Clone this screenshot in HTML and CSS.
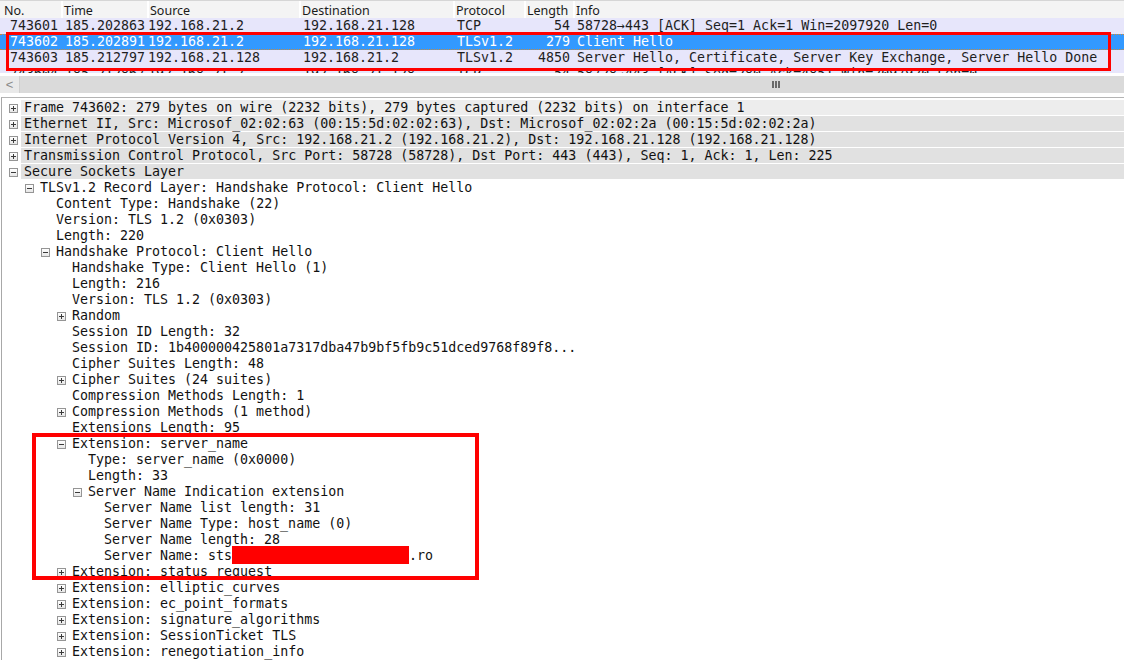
FILE: index.html
```html
<!DOCTYPE html>
<html>
<head>
<meta charset="utf-8">
<link rel="stylesheet" href="styles.css">
</head>
<body>
<div class="app">
  <div class="plist">
    <div class="prow phead">
      <div class="hc">No.</div>
      <div class="hc">Time</div>
      <div class="hc">Source</div>
      <div class="hc">Destination</div>
      <div class="hc">Protocol</div>
      <div class="hc">Length</div>
      <div class="hc">Info</div>
    </div>
    <div class="prow pdata">
      <div class="c num">743601</div>
      <div class="c time">185.202863</div>
      <div class="c src">192.168.21.2</div>
      <div class="c dst">192.168.21.128</div>
      <div class="c proto">TCP</div>
      <div class="c len">54</div>
      <div class="c info">58728→443 [ACK] Seq=1 Ack=1 Win=2097920 Len=0</div>
    </div>
    <div class="prow pdata sel">
      <div class="c num">743602</div>
      <div class="c time">185.202891</div>
      <div class="c src">192.168.21.2</div>
      <div class="c dst">192.168.21.128</div>
      <div class="c proto">TLSv1.2</div>
      <div class="c len">279</div>
      <div class="c info">Client Hello</div>
    </div>
    <div class="prow pdata">
      <div class="c num">743603</div>
      <div class="c time">185.212797</div>
      <div class="c src">192.168.21.128</div>
      <div class="c dst">192.168.21.2</div>
      <div class="c proto">TLSv1.2</div>
      <div class="c len">4850</div>
      <div class="c info">Server Hello, Certificate, Server Key Exchange, Server Hello Done</div>
    </div>
    <div class="prow pdata">
      <div class="c num">743604</div>
      <div class="c time">185.212867</div>
      <div class="c src">192.168.21.2</div>
      <div class="c dst">192.168.21.128</div>
      <div class="c proto">TCP</div>
      <div class="c len">54</div>
      <div class="c info">58728→443 [ACK] Seq=280 Ack=4851 Win=2097920 Len=0</div>
    </div>
  </div>
  <div class="hscroll">
    <div class="sb-btn">&lt;</div>
    <div class="sb-thumb"><span class="grip"><i></i><i></i><i></i></span></div>
  </div>
  <div class="tree">
    <div class="tr l0 top hov"><span class="tg plus"></span><span class="tx">Frame 743602: 279 bytes on wire (2232 bits), 279 bytes captured (2232 bits) on interface 1</span></div>
    <div class="tr l0 top"><span class="tg plus"></span><span class="tx">Ethernet II, Src: Microsof_02:02:63 (00:15:5d:02:02:63), Dst: Microsof_02:02:2a (00:15:5d:02:02:2a)</span></div>
    <div class="tr l0 top"><span class="tg plus"></span><span class="tx">Internet Protocol Version 4, Src: 192.168.21.2 (192.168.21.2), Dst: 192.168.21.128 (192.168.21.128)</span></div>
    <div class="tr l0 top"><span class="tg plus"></span><span class="tx">Transmission Control Protocol, Src Port: 58728 (58728), Dst Port: 443 (443), Seq: 1, Ack: 1, Len: 225</span></div>
    <div class="tr l0 top"><span class="tg minus"></span><span class="tx">Secure Sockets Layer</span></div>
    <div class="tr l1"><span class="tg minus"></span><span class="tx">TLSv1.2 Record Layer: Handshake Protocol: Client Hello</span></div>
    <div class="tr l2"><span class="tg"></span><span class="tx">Content Type: Handshake (22)</span></div>
    <div class="tr l2"><span class="tg"></span><span class="tx">Version: TLS 1.2 (0x0303)</span></div>
    <div class="tr l2"><span class="tg"></span><span class="tx">Length: 220</span></div>
    <div class="tr l2"><span class="tg minus"></span><span class="tx">Handshake Protocol: Client Hello</span></div>
    <div class="tr l3"><span class="tg"></span><span class="tx">Handshake Type: Client Hello (1)</span></div>
    <div class="tr l3"><span class="tg"></span><span class="tx">Length: 216</span></div>
    <div class="tr l3"><span class="tg"></span><span class="tx">Version: TLS 1.2 (0x0303)</span></div>
    <div class="tr l3"><span class="tg plus"></span><span class="tx">Random</span></div>
    <div class="tr l3"><span class="tg"></span><span class="tx">Session ID Length: 32</span></div>
    <div class="tr l3"><span class="tg"></span><span class="tx">Session ID: 1b400000425801a7317dba47b9bf5fb9c51dced9768f89f8...</span></div>
    <div class="tr l3"><span class="tg"></span><span class="tx">Cipher Suites Length: 48</span></div>
    <div class="tr l3"><span class="tg plus"></span><span class="tx">Cipher Suites (24 suites)</span></div>
    <div class="tr l3"><span class="tg"></span><span class="tx">Compression Methods Length: 1</span></div>
    <div class="tr l3"><span class="tg plus"></span><span class="tx">Compression Methods (1 method)</span></div>
    <div class="tr l3"><span class="tg"></span><span class="tx">Extensions Length: 95</span></div>
    <div class="tr l3"><span class="tg minus"></span><span class="tx">Extension: server_name</span></div>
    <div class="tr l4"><span class="tg"></span><span class="tx">Type: server_name (0x0000)</span></div>
    <div class="tr l4"><span class="tg"></span><span class="tx">Length: 33</span></div>
    <div class="tr l4"><span class="tg minus"></span><span class="tx">Server Name Indication extension</span></div>
    <div class="tr l5"><span class="tg"></span><span class="tx">Server Name list length: 31</span></div>
    <div class="tr l5"><span class="tg"></span><span class="tx">Server Name Type: host_name (0)</span></div>
    <div class="tr l5"><span class="tg"></span><span class="tx">Server Name length: 28</span></div>
    <div class="tr l5"><span class="tg"></span><span class="tx">Server Name: sts<span class="redact"></span>.ro</span></div>
    <div class="tr l3"><span class="tg plus"></span><span class="tx">Extension: status_request</span></div>
    <div class="tr l3"><span class="tg plus"></span><span class="tx">Extension: elliptic_curves</span></div>
    <div class="tr l3"><span class="tg plus"></span><span class="tx">Extension: ec_point_formats</span></div>
    <div class="tr l3"><span class="tg plus"></span><span class="tx">Extension: signature_algorithms</span></div>
    <div class="tr l3"><span class="tg plus"></span><span class="tx">Extension: SessionTicket TLS</span></div>
    <div class="tr l3"><span class="tg plus"></span><span class="tx">Extension: renegotiation_info</span></div>
  </div>
  <div class="mark mark-rows"></div>
  <div class="mark mark-sni"></div>
</div>
</body>
</html>
```

FILE: styles.css
```css
html, body {
  margin: 0;
  padding: 0;
  background: #ffffff;
}
body {
  width: 1124px;
  height: 665px;
  overflow: hidden;
}
.app {
  position: relative;
  width: 1124px;
  height: 665px;
  overflow: hidden;
  font-family: "DejaVu Sans Mono", "Liberation Mono", monospace;
  font-size: 13.3px;
  color: #111111;
}

/* ---------- packet list ---------- */
.plist {
  height: 73px;
  overflow: hidden;
}
.prow {
  display: grid;
  grid-template-columns: 61px 86px 152px 154px 71px 49px 1fr;
  box-sizing: border-box;
}
.phead {
  height: 18px;
  border-top: 1px solid #d6d6d6;
  font-family: "Noto Sans", "Open Sans", "Liberation Sans", sans-serif;
  font-size: 12.5px;
  color: #1b1b1b;
}
.hc {
  background: #f4f4f4;
  border-left: 2px solid #ffffff;
  padding-left: 1px;
  padding-top: 2px;
  line-height: 15px;
  white-space: nowrap;
  overflow: hidden;
}
.hc:first-child {
  border-left: none;
  padding-left: 4px;
}
.pdata {
  height: 16px;
  line-height: 16px;
  background: #e7e6fb;
  color: #1e1e1e;
  white-space: nowrap;
}
.pdata.sel {
  background: #3399ff;
  color: #ffffff;
  border-top: 1px dotted #c98a3e;
  border-bottom: 1px dotted #c98a3e;
  line-height: 14px;
}
.c {
  overflow: hidden;
  white-space: nowrap;
}
.num { text-align: right; padding-right: 3px; }
.time { padding-left: 4px; }
.src { padding-left: 1px; }
.dst { padding-left: 4px; }
.proto { padding-left: 4px; }
.len { text-align: right; padding-right: 3px; }
.info { padding-left: 4px; }

/* ---------- horizontal scrollbar ---------- */
.hscroll {
  margin-top: 3px;
  height: 17px;
  display: flex;
  background: #dadada;
}
.sb-btn {
  width: 20px;
  box-sizing: border-box;
  background: #e9e9e9;
  border-right: 1px solid #cfcfcf;
  color: #8a8a8a;
  font-family: "Liberation Sans", sans-serif;
  font-size: 13px;
  line-height: 17px;
  text-align: center;
}
.sb-thumb {
  flex: 1;
  display: flex;
  align-items: center;
  padding-left: 752px;
}
.grip {
  display: flex;
  gap: 1px;
}
.grip i {
  display: block;
  width: 2px;
  height: 7px;
  background: #6a6a6a;
}

/* ---------- details tree ---------- */
.tree {
  margin-top: 4px;
  margin-left: 1px;
  border-top: 1px solid #b4b4b4;
  border-left: 1px solid #a8a8a8;
  padding-top: 2px;
}
.tr {
  display: flex;
  align-items: center;
  height: 16px;
  white-space: nowrap;
}
.tg {
  width: 12px;
  flex: none;
  height: 9px;
  position: relative;
}
.tg.plus, .tg.minus {
  width: 9px;
  margin-right: 3px;
  box-sizing: border-box;
  border: 1px solid #959595;
  background: linear-gradient(#ffffff, #e6e6e6);
}
.tg.plus::before, .tg.minus::before {
  content: "";
  position: absolute;
  left: 1px;
  top: 3px;
  width: 5px;
  height: 1px;
  background: #3a3a3a;
}
.tg.plus::after {
  content: "";
  position: absolute;
  left: 3px;
  top: 1px;
  width: 1px;
  height: 5px;
  background: #3a3a3a;
}
.tx {
  padding-left: 3px;
  line-height: 15px;
  height: 16px;
  box-sizing: border-box;
}
.top .tx {
  flex: 1;
  background: #e1e1e1;
  border-bottom: 1px solid #ffffff;
  line-height: 15px;
}
.top.hov .tx {
  background: #ededed;
}
.l0 { padding-left: 7px; }
.l1 { padding-left: 23px; }
.l2 { padding-left: 39px; }
.l3 { padding-left: 55px; }
.l4 { padding-left: 71px; }
.l5 { padding-left: 87px; }

.redact {
  display: inline-block;
  width: 177px;
  height: 18px;
  margin-top: -2px;
  vertical-align: top;
  background: #ff0000;
}

/* ---------- red annotation frames ---------- */
.mark {
  position: absolute;
  box-sizing: border-box;
  border: 3px solid #ff0000;
}
.mark-rows {
  left: 6px;
  top: 32px;
  width: 1105px;
  height: 39px;
}
.mark-sni {
  left: 32px;
  top: 433px;
  width: 447px;
  height: 147px;
  border-width: 4px;
}
```
